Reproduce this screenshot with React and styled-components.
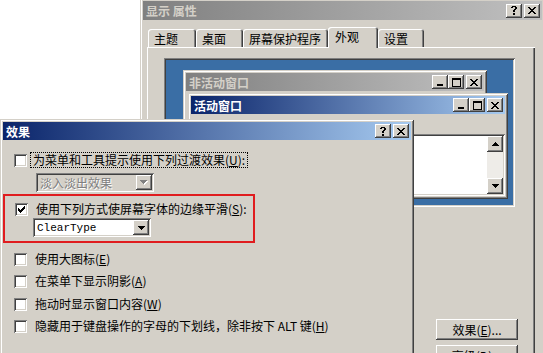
import styled, { createGlobalStyle } from 'styled-components';

const GlobalStyle = createGlobalStyle`
  html, body {
    margin: 0;
    background: #fff;
  }
  body {
    font-family: "Noto Sans CJK SC", "Liberation Sans", sans-serif;
    font-size: 12px;
    color: #000;
  }
`;

const raised = `
  box-shadow: inset -1px -1px #404040, inset 1px 1px #fff,
    inset -2px -2px #808080, inset 2px 2px #d4d0c8;
`;

const sunken = `
  box-shadow: inset 1px 1px #808080, inset -1px -1px #fff,
    inset 2px 2px #404040, inset -2px -2px #d4d0c8;
`;

// little bitmap glyphs, one string per pixel row
const GLYPHS = {
  close: ['##....##', '.##..##.', '..####..', '...##...', '..####..', '.##..##.', '##....##'],
  help: ['.####.', '##..##', '....##', '...##.', '..##..', '..##..', '......', '..##..', '..##..'],
  min: ['......', '......', '......', '......', '......', '......', '######', '######'],
  max: ['#########', '#########', '#.......#', '#.......#', '#.......#', '#.......#', '#.......#', '#.......#', '#########'],
  down: ['#######', '.#####.', '..###..', '...#...'],
  up: ['...#...', '..###..', '.#####.', '#######'],
  check: ['......#', '.....##', '#...###', '##.###.', '#####..', '.###...', '..#....'],
};

const Glyph = ({ name, color = '#000', shadow }) => {
  const rows = GLYPHS[name];
  const w = rows[0].length;
  const h = rows.length;
  const rects = [];
  rows.forEach((row, y) => {
    [...row].forEach((c, x) => {
      if (c === '#') rects.push(<rect key={`${x}-${y}`} x={x} y={y} width="1" height="1" />);
    });
  });
  return (
    <svg width={w + (shadow ? 1 : 0)} height={h + (shadow ? 1 : 0)} shapeRendering="crispEdges">
      {shadow && <g fill={shadow} transform="translate(1 1)">{rects}</g>}
      <g fill={color}>{rects}</g>
    </svg>
  );
};

const Desktop = styled.div`
  position: relative;
  width: 543px;
  height: 353px;
  overflow: hidden;
  background: #fff;
`;

const Frame = styled.div`
  position: absolute;
  left: ${(p) => p.$x}px;
  top: ${(p) => p.$y}px;
  width: ${(p) => p.$w}px;
  height: ${(p) => p.$h}px;
  box-sizing: border-box;
  padding: 3px;
  display: flex;
  flex-direction: column;
  background: #d4d0c8;
  box-shadow: inset 1px 1px #d4d0c8, inset -1px -1px #404040,
    inset 2px 2px #fff, inset -2px -2px #808080;
`;

const TitleBar = styled.div`
  flex: none;
  height: ${(p) => p.$h || 18}px;
  display: flex;
  align-items: center;
  justify-content: space-between;
  padding: 0 2px 0 3px;
  background: ${(p) =>
    p.$active
      ? 'linear-gradient(90deg, #0a246a, #a6caf0)'
      : 'linear-gradient(90deg, #808080, #c0c0c0)'};
  color: ${(p) => (p.$active ? '#fff' : '#d4d0c8')};
  font-weight: bold;
  font-size: 12px;
  white-space: nowrap;
`;

const Caption = styled.div`
  display: flex;
  align-items: center;
`;

const CapButton = styled.span`
  width: 16px;
  height: 14px;
  margin-left: ${(p) => p.$gap || 0}px;
  display: grid;
  place-items: center;
  background: #d4d0c8;
  ${raised}
`;

const WinBody = styled.div`
  flex: 1;
  display: flex;
  flex-direction: column;
`;

const TabStrip = styled.div`
  display: flex;
  align-items: flex-end;
  height: 20px;
  margin: 7px 0 0 5px;
  position: relative;
  z-index: 1;
`;

const Tab = styled.div`
  box-sizing: border-box;
  width: ${(p) => p.$w}px;
  height: ${(p) => (p.$selected ? 21 : 18)}px;
  margin-bottom: ${(p) => (p.$selected ? -1 : 0)}px;
  padding: ${(p) => (p.$selected ? '0 0 3px 7px' : '0 0 0 6px')};
  display: flex;
  align-items: center;
  background: #d4d0c8;
  border-radius: 3px 3px 0 0;
  box-shadow: inset 1px 1px #fff, inset -1px 0 #404040, inset -2px 0 #808080;
  white-space: nowrap;
`;

const Panel = styled.div`
  flex: 1;
  width: 388px;
  margin-left: 4px;
  box-sizing: border-box;
  padding: 11px 17px 0 17px;
  display: flex;
  flex-direction: column;
  background: #d4d0c8;
  box-shadow: inset 1px 1px #fff, inset -1px -1px #404040, inset -2px -2px #808080;
`;

const Preview = styled.div`
  position: relative;
  flex: none;
  width: 351px;
  height: 149px;
  background: #3a6ea5;
  ${sunken}
`;

const MenuBar = styled.div`
  height: 19px;
`;

const TextArea = styled.div`
  flex: 1;
  margin-top: 1px;
  padding: 2px;
  display: flex;
  background: #fff;
  ${sunken}
`;

const TextContent = styled.div`
  flex: 1;
  padding: 2px 4px;
  font-size: 12px;
`;

const ScrollBar = styled.div`
  width: 16px;
  display: flex;
  flex-direction: column;
  justify-content: space-between;
  background: #eeece8;
`;

const ScrollArrow = styled.span`
  width: 16px;
  height: 16px;
  display: grid;
  place-items: center;
  background: #d4d0c8;
  ${raised}
`;

const ButtonColumn = styled.div`
  align-self: flex-end;
  display: flex;
  flex-direction: column;
  gap: 5px;
  margin-top: 112px;
`;

const PushButton = styled.div`
  width: 82px;
  height: 21px;
  display: flex;
  align-items: center;
  justify-content: center;
  background: #d4d0c8;
  font-size: 12px;
  ${raised}
`;

const DialogBody = styled.div`
  display: flex;
  flex-direction: column;
  padding-top: 12px;
`;

const OptionRow = styled.div`
  height: 16px;
  display: flex;
  align-items: center;
  gap: 5px;
  margin-left: ${(p) => p.$ml ?? 11}px;
  margin-top: ${(p) => p.$mt || 0}px;
  white-space: nowrap;
`;

const Check = styled.span`
  flex: none;
  width: 13px;
  height: 13px;
  box-sizing: border-box;
  display: grid;
  place-items: center;
  background: #fff;
  ${sunken}
`;

const Label = styled.span`
  font-size: 12px;
  line-height: 14px;
  padding: 0 2px;
  margin-left: ${(p) => (p.$focus ? -2 : 0)}px;
  border: 1px dotted ${(p) => (p.$focus ? '#000' : 'transparent')};
`;

const Combo = styled.div`
  width: 118px;
  height: 19px;
  box-sizing: border-box;
  margin-left: ${(p) => p.$ml}px;
  margin-top: ${(p) => p.$mt || 0}px;
  padding: 2px;
  display: flex;
  align-items: center;
  background: ${(p) => (p.$disabled ? '#d4d0c8' : '#fff')};
  ${sunken}
`;

const ComboText = styled.span`
  flex: 1;
  padding-left: 2px;
  font-family: ${(p) =>
    p.$mono ? '"Liberation Mono", monospace' : '"Noto Sans CJK SC", sans-serif'};
  font-size: ${(p) => (p.$mono ? 11 : 12)}px;
  color: ${(p) => (p.$disabled ? '#808080' : '#000')};
  text-shadow: ${(p) => (p.$disabled ? '1px 1px #fff' : 'none')};
`;

const ComboArrow = styled.span`
  width: 16px;
  height: 15px;
  display: grid;
  place-items: center;
  background: #d4d0c8;
  ${raised}
`;

const Highlight = styled.div`
  width: 252px;
  height: 49px;
  box-sizing: border-box;
  margin-top: 2px;
  padding: 5px 0 0 10px;
  border: 2px solid #e01c1f;
  display: flex;
  flex-direction: column;
`;

const TABS = [
  { label: '主题', w: 48 },
  { label: '桌面', w: 47 },
  { label: '屏幕保护程序', w: 85 },
  { label: '外观', w: 50, selected: true },
  { label: '设置', w: 46 },
];

const CaptionButtons = ({ kind }) => (
  <Caption>
    {kind === 'dialog' ? (
      <>
        <CapButton>
          <Glyph name="help" />
        </CapButton>
        <CapButton $gap={2}>
          <Glyph name="close" />
        </CapButton>
      </>
    ) : (
      <>
        <CapButton>
          <Glyph name="min" />
        </CapButton>
        <CapButton>
          <Glyph name="max" />
        </CapButton>
        <CapButton $gap={2}>
          <Glyph name="close" />
        </CapButton>
      </>
    )}
  </Caption>
);

const Option = ({ checked, children, focus, mt, ml }) => (
  <OptionRow $mt={mt} $ml={ml}>
    <Check>{checked && <Glyph name="check" />}</Check>
    <Label $focus={focus}>{children}</Label>
  </OptionRow>
);

const Accel = ({ k }) => (
  <>
    (<u>{k}</u>)
  </>
);

export default function App() {
  return (
    <>
      <GlobalStyle />
      <Desktop>
        <Frame $x={140} $y={-2} $w={405} $h={372}>
          <TitleBar $h={19}>
            <span>显示 属性</span>
            <CaptionButtons kind="dialog" />
          </TitleBar>
          <WinBody>
            <TabStrip>
              {TABS.map((t) => (
                <Tab key={t.label} $w={t.w} $selected={t.selected}>
                  {t.label}
                </Tab>
              ))}
            </TabStrip>
            <Panel>
              <Preview>
                <Frame $x={19} $y={12} $w={304} $h={100}>
                  <TitleBar>
                    <span>非活动窗口</span>
                    <CaptionButtons />
                  </TitleBar>
                </Frame>
                <Frame $x={24} $y={35} $w={320} $h={106}>
                  <TitleBar $active>
                    <span>活动窗口</span>
                    <CaptionButtons />
                  </TitleBar>
                  <MenuBar />
                  <TextArea>
                    <TextContent>窗口文字</TextContent>
                    <ScrollBar>
                      <ScrollArrow>
                        <Glyph name="up" />
                      </ScrollArrow>
                      <ScrollArrow>
                        <Glyph name="down" />
                      </ScrollArrow>
                    </ScrollBar>
                  </TextArea>
                </Frame>
              </Preview>
              <ButtonColumn>
                <PushButton>
                  效果<Accel k="E" />...
                </PushButton>
                <PushButton>
                  高级<Accel k="D" />...
                </PushButton>
              </ButtonColumn>
            </Panel>
          </WinBody>
        </Frame>

        <Frame $x={0} $y={119} $w={414} $h={250}>
          <TitleBar $active>
            <span>效果</span>
            <CaptionButtons kind="dialog" />
          </TitleBar>
          <DialogBody>
            <Option focus>
              为菜单和工具提示使用下列过渡效果<Accel k="U" />:
            </Option>
            <Combo $ml={33} $mt={5} $disabled>
              <ComboText $disabled>淡入淡出效果</ComboText>
              <ComboArrow>
                <Glyph name="down" color="#808080" shadow="#fff" />
              </ComboArrow>
            </Combo>
            <Highlight>
              <Option checked ml={0}>
                使用下列方式使屏幕字体的边缘平滑<Accel k="S" />:
              </Option>
              <Combo $ml={18} $mt={1}>
                <ComboText $mono>ClearType</ComboText>
                <ComboArrow>
                  <Glyph name="down" />
                </ComboArrow>
              </Combo>
            </Highlight>
            <Option mt={8}>
              使用大图标<Accel k="E" />
            </Option>
            <Option mt={6}>
              在菜单下显示阴影<Accel k="A" />
            </Option>
            <Option mt={7}>
              拖动时显示窗口内容<Accel k="W" />
            </Option>
            <Option mt={6}>
              隐藏用于键盘操作的字母的下划线，除非按下 ALT 键<Accel k="H" />
            </Option>
          </DialogBody>
        </Frame>
      </Desktop>
    </>
  );
}
